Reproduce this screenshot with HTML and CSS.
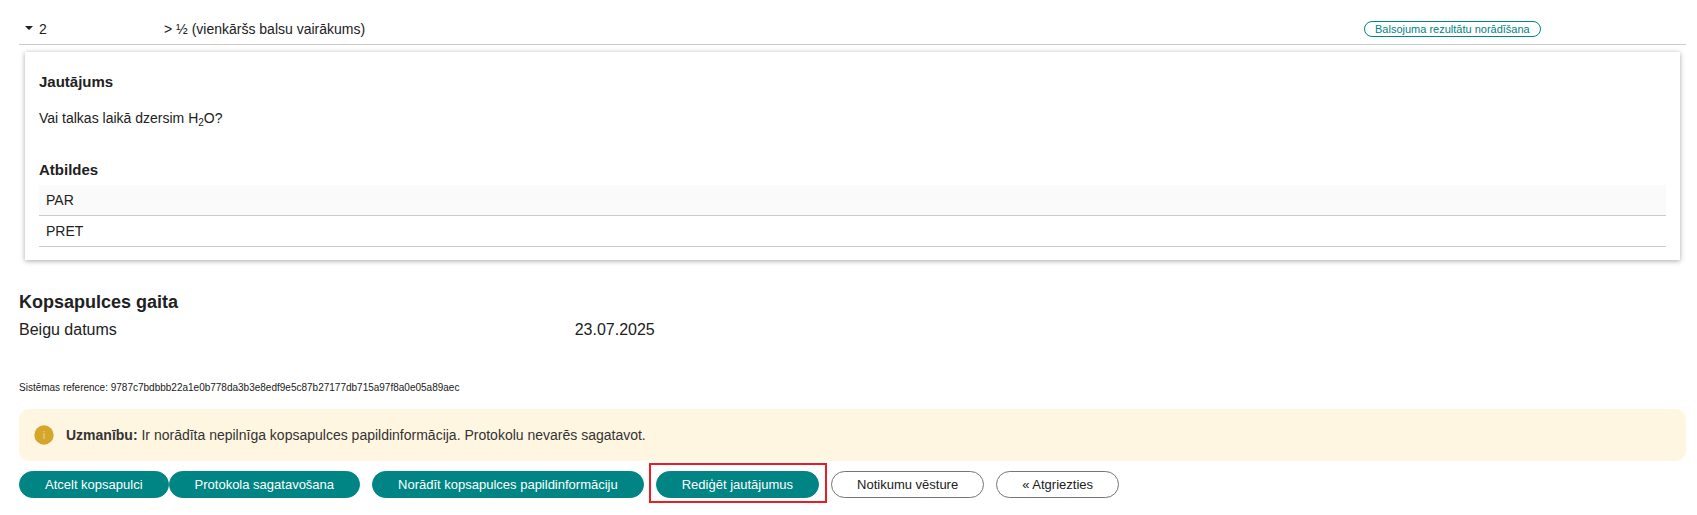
FILE: index.html
```html
<!DOCTYPE html>
<html lang="lv">
<head>
<meta charset="utf-8">
<title>Kopsapulce</title>
<link rel="stylesheet" href="styles.css">
</head>
<body>
<main class="page">
  <section class="question">
    <div class="question-row">
      <button class="toggle" type="button" aria-expanded="true" aria-controls="question-2">
        <svg class="caret" viewBox="0 0 8 4" aria-hidden="true"><path d="M0 0h8L4.6 3.6q-.6.6-1.2 0z"/></svg>
        <span>2</span>
      </button>
      <span>&gt; ½ (vienkāršs balsu vairākums)</span>
      <div><button class="pill-small" type="button">Balsojuma rezultātu norādīšana</button></div>
    </div>
    <div class="panel" id="question-2">
      <h3 class="panel-title">Jautājums</h3>
      <p class="panel-text">Vai talkas laikā dzersim H<sub class="subscript">2</sub>O?</p>
      <h3 class="panel-title" id="answers-title">Atbildes</h3>
      <table class="answers" aria-labelledby="answers-title">
        <tbody>
          <tr><td>PAR</td></tr>
          <tr><td>PRET</td></tr>
        </tbody>
      </table>
    </div>
  </section>

  <section class="progress">
    <h2 class="section-title">Kopsapulces gaita</h2>
    <dl class="details">
      <dt>Beigu datums</dt>
      <dd>23.07.2025</dd>
    </dl>
  </section>

  <p class="reference">Sistēmas reference: 9787c7bdbbb22a1e0b778da3b3e8edf9e5c87b27177db715a97f8a0e05a89aec</p>

  <div class="notice" role="alert">
    <svg class="notice-icon" viewBox="0 0 20 20" aria-hidden="true">
      <circle class="notice-disc" cx="10" cy="10" r="9.7"/>
      <path class="notice-mark" d="M9.5 6h1v1.3h-1zM9.5 8.2h1V14h-1z"/>
    </svg>
    <p class="notice-text"><strong>Uzmanību:</strong> Ir norādīta nepilnīga kopsapulces papildinformācija. Protokolu nevarēs sagatavot.</p>
  </div>

  <div class="actions">
    <div class="action-pair">
      <button class="pill" type="button">Atcelt kopsapulci</button>
      <button class="pill" type="button">Protokola sagatavošana</button>
    </div>
    <button class="pill" type="button">Norādīt kopsapulces papildinformāciju</button>
    <div class="marked"><button class="pill" type="button">Rediģēt jautājumus</button></div>
    <button class="pill pill-outline" type="button">Notikumu vēsture</button>
    <button class="pill pill-outline" type="button">« Atgriezties</button>
  </div>
</main>
</body>
</html>
```
FILE: styles.css
```css
* {
  box-sizing: border-box;
}

body {
  margin: 0;
  background: #fff;
  color: #212121;
  font: 14px/20px "Liberation Sans", Arial, sans-serif;
}

button {
  font-family: inherit;
  cursor: pointer;
}

h2, h3, p, dl, dd {
  margin: 0;
}

.page {
  padding: 14px 11px 16px 19px;
}

.question-row {
  display: grid;
  grid-template-columns: 145px 1fr 322px;
  align-items: center;
  height: 31px;
  border-bottom: 1px solid #ccc;
}

.toggle {
  display: flex;
  align-items: center;
  justify-self: start;
  gap: 6px;
  padding: 0 0 0 6px;
  border: 0;
  background: none;
  color: inherit;
  font-size: 14px;
  line-height: 20px;
}

.caret {
  width: 8px;
  height: 4px;
  margin-bottom: 2px;
  fill: #212121;
}

.pill-small {
  display: block;
  padding: 0 10px;
  border: 1px solid #008484;
  border-radius: 8px;
  background: #fff;
  color: #008484;
  font-size: 11px;
  line-height: 14px;
}

.panel {
  margin: 7px 6px 0;
  padding: 20px 14px 13px;
  background: #fff;
  box-shadow: 0 1px 5px rgba(0, 0, 0, 0.35);
}

.panel-title {
  font-size: 15px;
  line-height: 20px;
}

.panel-text {
  margin: 16px 0 32px;
}

.subscript {
  font-size: 10px;
  line-height: 0;
  vertical-align: -3px;
}

.answers {
  width: 100%;
  margin-top: 5px;
  border-collapse: collapse;
}

.answers td {
  padding: 5px 7px;
  border-bottom: 1px solid #ccc;
}

.answers tr:nth-child(odd) {
  background: #fafafa;
}

.progress {
  margin-top: 30px;
}

.section-title {
  font-size: 18px;
  line-height: 24px;
}

.details {
  display: grid;
  grid-template-columns: 1fr 2fr;
  margin-top: 4px;
  font-size: 16px;
  line-height: 24px;
}

.reference {
  margin-top: 38px;
  font-size: 10px;
  line-height: 16px;
}

.notice {
  display: flex;
  align-items: center;
  gap: 12px;
  margin-top: 13px;
  padding: 16px 15px;
  border-radius: 10px;
  background: #fff6e2;
}

.notice-icon {
  width: 20px;
  height: 20px;
}

.notice-disc {
  fill: #d5a62a;
}

.notice-mark {
  fill: #f3d58c;
}

.notice-text {
  color: #333;
}

.actions {
  display: flex;
  flex-wrap: wrap;
  gap: 12px;
  margin-top: 10px;
}

.action-pair {
  display: flex;
}

.pill {
  padding: 0 25px;
  border: 1px solid #008484;
  border-radius: 14px;
  background: #008484;
  color: #fff;
  font-size: 13px;
  line-height: 25px;
}

.pill-outline {
  border-color: #757575;
  background: #fff;
  color: #212121;
}

.marked {
  position: relative;
}

.marked::after {
  position: absolute;
  inset: -8px -8px -5px -7px;
  border: 2px solid #ed1c24;
  content: "";
  pointer-events: none;
}
```
